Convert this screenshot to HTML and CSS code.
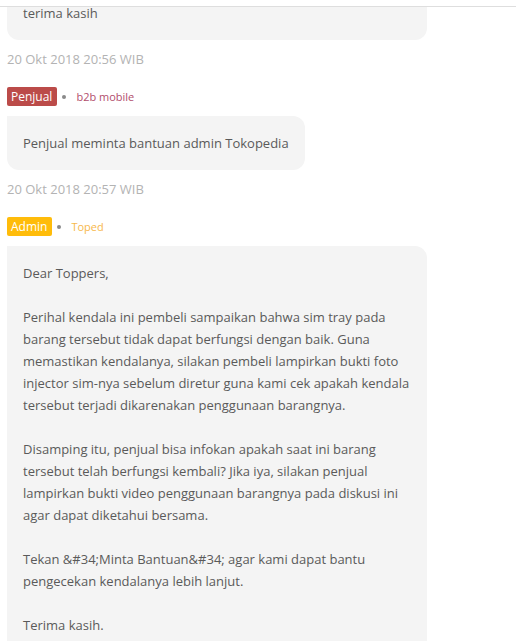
FILE: index.html
```html
<!DOCTYPE html>
<html lang="en">
	<head>
		<meta charset="UTF-8">
		<meta name="viewport" content="width=device-width, initial-scale=1.0">
		<title>Diskusi Komplain</title>
		<link rel="stylesheet" href="styles.css">
	</head>
	<body>
		<div class="topbar"></div>

		<div class="thread">
			<div class="message">
				<div class="bubble bubble-wide">terima kasih</div>
				<div class="time">20 Okt 2018 20:56 WIB</div>
			</div>

			<div class="message">
				<div class="sender">
					<span class="badge badge-seller">Penjual</span>
					<span class="dot"></span>
					<span class="name name-seller">b2b mobile</span>
				</div>
				<div class="bubble">Penjual meminta bantuan admin Tokopedia</div>
				<div class="time">20 Okt 2018 20:57 WIB</div>
			</div>

			<div class="message">
				<div class="sender">
					<span class="badge badge-admin">Admin</span>
					<span class="dot"></span>
					<span class="name name-admin">Toped</span>
				</div>
				<div class="bubble">
					<p>Dear Toppers,</p>
					<p>Perihal kendala ini pembeli sampaikan bahwa sim tray pada barang tersebut tidak dapat berfungsi dengan baik. Guna memastikan kendalanya, silakan pembeli lampirkan bukti foto injector sim-nya sebelum diretur guna kami cek apakah kendala tersebut terjadi dikarenakan penggunaan barangnya.</p>
					<p>Disamping itu, penjual bisa infokan apakah saat ini barang tersebut telah berfungsi kembali? Jika iya, silakan penjual lampirkan bukti video penggunaan barangnya pada diskusi ini agar dapat diketahui bersama.</p>
					<p>Tekan &amp;#34;Minta Bantuan&amp;#34; agar kami dapat bantu pengecekan kendalanya lebih lanjut.</p>
					<p>Terima kasih.</p>
				</div>
			</div>
		</div>
	</body>
</html>
```

FILE: styles.css
```css
* {
    box-sizing: border-box;
}

body {
    margin: 0;
    font-family: "Open Sans", "Noto Sans", Arial, sans-serif;
    font-size: 13px;
    line-height: 22px;
    color: #5a5a5a;
    background-color: #ffffff;
    overflow: hidden;
}

.topbar {
    position: fixed;
    top: 0;
    left: 0;
    right: 0;
    height: 7px;
    background-color: #ffffff;
    border-bottom: 1px solid #dedede;
    z-index: 2;
}

.thread {
    margin-top: -14px;
    padding: 0 7px;
}

.message {
    margin-bottom: 17px;
}

.bubble {
    width: fit-content;
    max-width: 420px;
    padding: 16px;
    background-color: #f4f4f4;
    border-radius: 0 12px 12px 12px;
}

.bubble-wide {
    width: 420px;
}

.bubble p {
    margin: 0 0 22px;
}

.bubble p:last-child {
    margin-bottom: 0;
}

.time {
    margin-top: 8px;
    color: #b3b3b3;
}

.sender {
    display: flex;
    align-items: center;
    height: 19px;
    margin-bottom: 10px;
}

.badge {
    display: inline-block;
    height: 19px;
    padding: 0 5px 0 4px;
    border-radius: 2px;
    color: #ffffff;
    font-size: 12px;
    line-height: 19px;
}

.badge-seller {
    background-color: #bb4b49;
}

.badge-admin {
    background-color: #ffbc0a;
}

.dot {
    width: 4px;
    height: 4px;
    margin: 0 10px 0 5px;
    border-radius: 50%;
    background-color: #8a8a8a;
}

.name {
    font-size: 11px;
}

.name-seller {
    color: #b24d6c;
}

.name-admin {
    color: #f7b84b;
}
```
